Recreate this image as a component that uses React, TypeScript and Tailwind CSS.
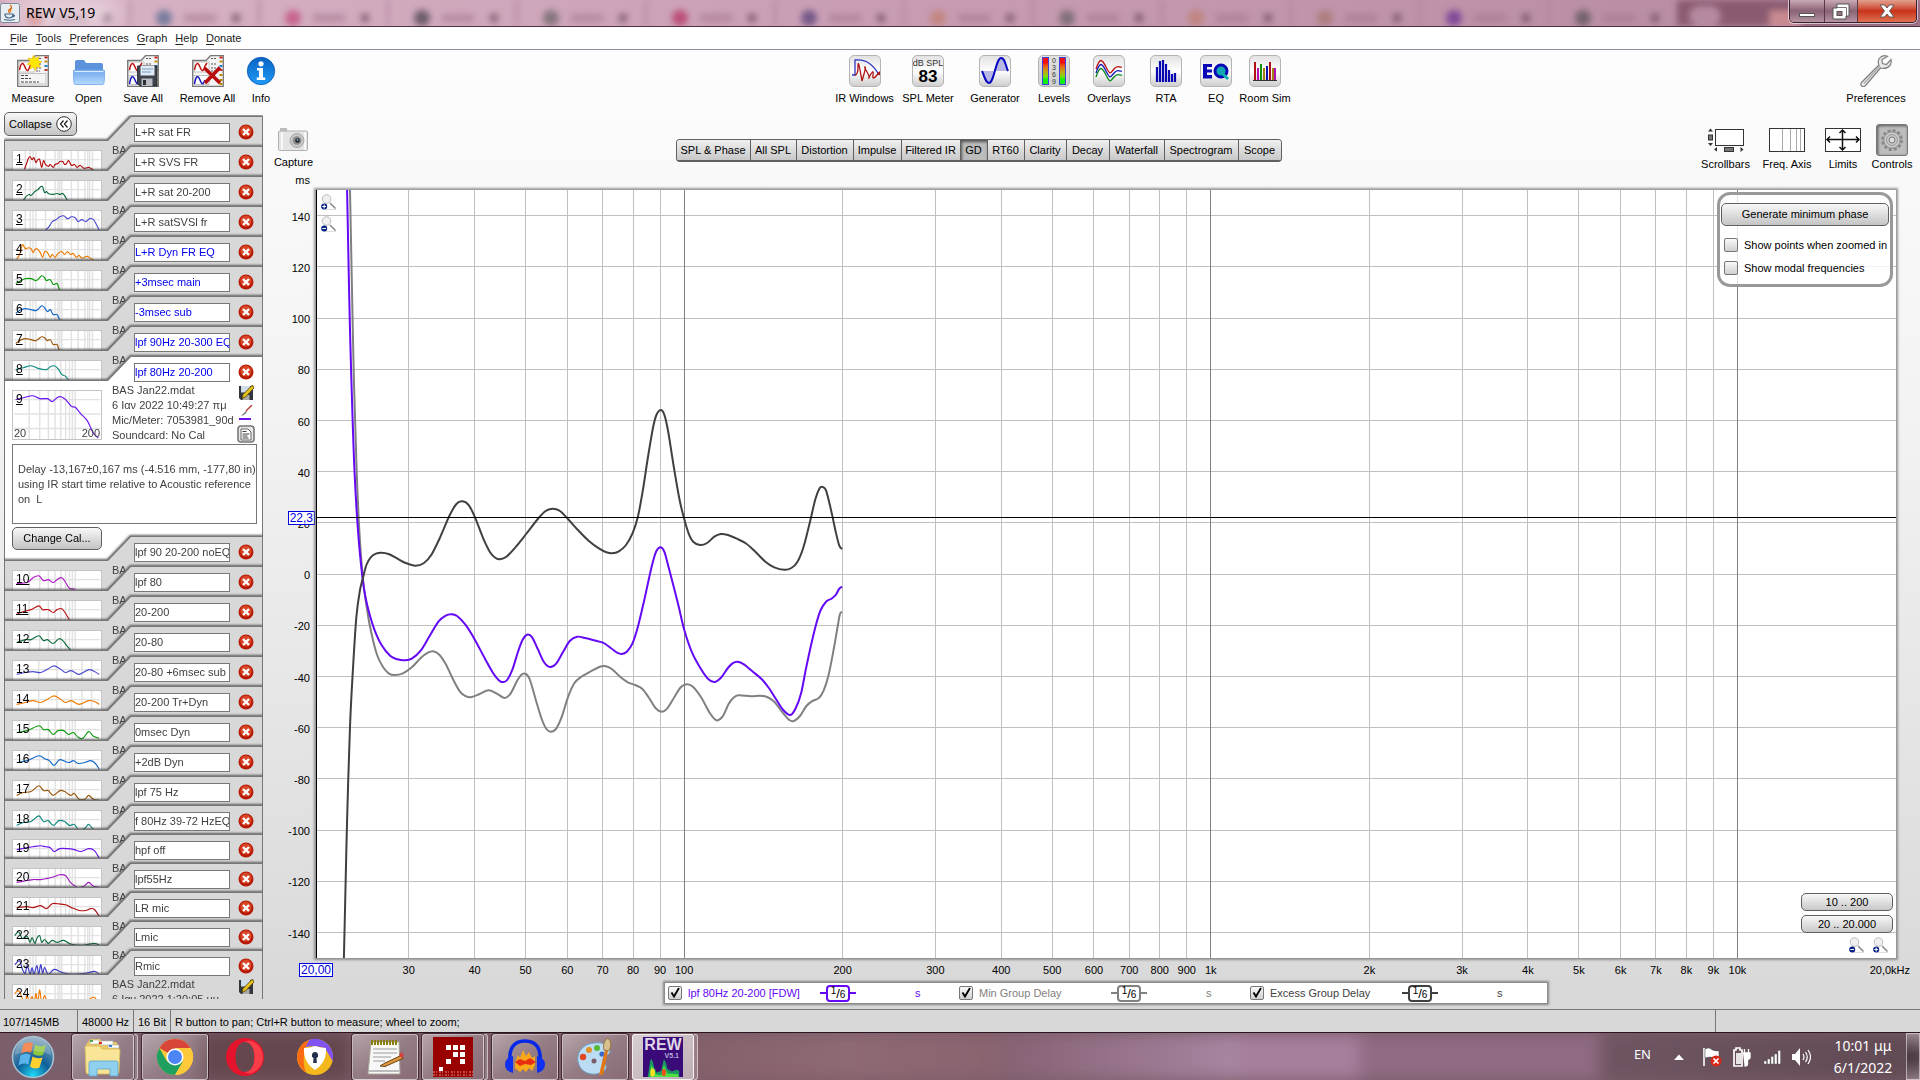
import React from "react";

type Pt = [number, number];

/* Smooth curve through the points (Catmull-Rom converted to cubic segments). */
function smooth(p: Pt[]): string {
  let d = `M${p[0][0]} ${p[0][1]}`;
  for (let i = 0; i < p.length - 1; i++) {
    const a = p[i - 1] ?? p[i];
    const b = p[i];
    const c = p[i + 1];
    const e = p[i + 2] ?? c;
    d += `C${(b[0] + (c[0] - a[0]) / 6).toFixed(2)} ${(b[1] + (c[1] - a[1]) / 6).toFixed(2)} ${(c[0] - (e[0] - b[0]) / 6).toFixed(2)} ${(c[1] - (e[1] - b[1]) / 6).toFixed(2)} ${c[0]} ${c[1]}`;
  }
  return d;
}

function pts(s: string): Pt[] {
  return s.trim().split(/\s+/).map((q) => q.split(",").map(Number) as Pt);
}

const EXCESS = pts(`27.9,768 29,720 31.1,630 34,536.7 36.9,480 40.4,426.7 44,400 47.2,387 50.4,375 54.7,367.3 60,363.7 65.4,362.7 72.6,364 81.5,368.7 90.4,373.3 99.4,375.7 107.6,373.3 115.4,364.7 124.4,346.7 133.3,326 140.4,314 146.5,311.3 152.9,315.3 159.4,328.3 167.2,348.3 174.4,362.7 179.7,368 184,369.3 190.4,366.7 199.4,357.3 210.1,344 222.6,328 229.7,321 236.9,318.7 244,321 251.1,328 261.9,340 272.6,350.7 283.3,358.7 290.4,362.3 296.1,363.3 302.9,361.3 310,355 316.5,343.3 321.9,326.7 326.9,300 331.5,270 336.9,238.3 340.4,225 344.7,220 348.3,224.7 352.2,241.7 358.3,280 363.6,310 368.3,329.3 372.6,343.3 377.2,351.7 384,355 391.1,353 398.3,346.7 404.7,344 411.9,345 420.8,348.7 429.7,353.3 438.6,361 449.4,371.7 458.3,377.3 468.3,379.7 475.4,378 481.5,371.7 487.6,356.7 494,331.7 499.4,309 503.6,298.3 506.5,297 510.1,300.7 515.4,321.7 519.7,341.7 523.3,355.7 526.1,359`);
const MEASURED = pts(`31.1,0 32.6,76.7 34,140 36.1,213.3 38.6,283.3 42.2,343.3 46.5,388 49.4,406.7 52.9,421.7 58.3,439.3 65.4,454.7 74.4,466 81.5,469.3 88.6,470.3 95.8,468.7 104.7,460.7 113.6,446 122.6,431.3 129.7,425.7 135.1,424.3 141.1,426 149.4,434.7 158.3,448.7 169,468.7 177.9,484.3 183.3,490.7 186.9,492 191.1,490 196.5,479.3 201.9,462 206.5,450 211.1,444.7 216.1,447.3 221.9,459.3 227.9,472 234,477 240.4,473.3 247.6,461 254,450.7 261.1,446.7 269,448 277.9,450.3 286.9,452.7 295.8,458.7 301.1,462.7 305.8,464 310.8,461.7 316.5,453.3 321.9,436.7 327.9,411.7 333.3,387 336.9,371.7 340.4,361 344.7,357.3 348.3,361.7 352.9,378.3 361.9,413.3 368.3,440 376.1,462.7 385.1,479.3 392.2,489 398.3,492 404.7,488 411.9,478 416.5,473.3 421.5,471.7 427.9,474.3 436.9,481.7 445.8,489.3 452.9,498 460.1,509.3 467.2,520 474.4,525 479.7,518.3 485.1,503.3 489.7,480 494.7,456.7 500.4,433.3 504.7,420 510.1,411.7 515.4,408.7 519.7,405 523.3,398.7 526.1,396.7`);
const MINIMUM = pts(`34,0 35.8,90 37.9,190 40.4,273.3 43.3,340 46.9,388 51.1,420 55.4,443.3 61.1,465 67.2,477.3 72.6,483.3 78.6,485 86.9,483.3 95.8,477.3 104.7,468 111.9,462.7 117.2,461.3 123.3,464.7 129.7,474 136.9,489 144,501.7 149.4,506 154.7,507.3 163.6,504 172.6,500.3 180.4,503.3 188.6,508 194.7,503.3 201.1,490.7 205.4,484.7 209,483.7 213.6,489 220.8,513.3 226.1,530 230.4,539 235.1,541.7 240.4,538.3 245.8,526.7 251.9,507.3 258.3,493.3 265.4,486.7 276.1,480.7 283.3,477 288.6,476 295.8,479 304.7,487.3 311.9,492.3 319,495 326.1,498.7 332.6,507.3 339.7,518.3 345.8,521.7 351.1,518.7 358.3,507.3 364.7,497.3 370.8,494.3 376.9,496.7 385.1,507.3 394,523.3 400.4,530.3 406.5,526.7 412.6,514 417.2,508 422.6,505.3 435.1,506.3 444,505.7 451.1,507 458.3,511.7 467.2,523.3 473.3,530 477.9,531 484,526 490.4,516 495.8,511.3 502.9,508 507.6,500.7 512.6,485 517.9,458.3 521.9,435 524,424 526.1,421.7`);

const WIDTH = 1580;
const HEIGHT = 768;
const fx = (f: number) => Math.log10(f / 20) / 3;
const FREQS = [30, 40, 50, 60, 70, 80, 90, 100, 200, 300, 400, 500, 600, 700, 800, 900, 1000, 2000, 3000, 4000, 5000, 6000, 7000, 8000, 9000, 10000];
const LEVELS = [140, 120, 100, 80, 60, 40, 20, 0, -20, -40, -60, -80, -100, -120, -140];

/* ---------- small icons ---------- */

function MeasureSheet({ kind }: { kind: "new" | "save" | "remove" }) {
  return (
    <svg viewBox="0 0 32 32" className="size-8" aria-hidden="true">
      <path d="M.7 31.3V5.5H14L18.500.7H31.3V31.3Z" fill="#f4f4f4" stroke="#777" strokeWidth="1.3" />
      <rect x="2" y="7" width="15" height="10" fill="#fff" stroke="#aaa" strokeWidth=".7" />
      <path d="M2.500 15C4 7 6 7 8 12S11 17 13 11L15 8" fill="none" stroke="#c01010" strokeWidth="1.5" />
      <g fill="none" strokeWidth="1.8">
        <path d="M27.500 2.500h3" stroke="#c81010" />
        <path d="M27.500 6.500h3" stroke="#b58a00" />
        <path d="M27.500 11h3" stroke="#0a70c8" />
        <path d="M27.500 15h3" stroke="#b02020" />
      </g>
      <path d="M19 3.500h6M19 9h5M19 13h5M19 16h4" stroke="#555" strokeWidth="1" strokeDasharray="2 1" />
      {kind === "new" ? (
        <>
          <path d="M4 20.500h8M4 23.500h10M4 27h18" stroke="#444" strokeWidth="1" strokeDasharray="3 1" />
          <path d="M2 18.500H29V29H2Z" fill="none" stroke="#aaa" strokeWidth=".7" />
          <path d="M16.500 0l1.700 3.500 3.800-2-1 4 4 1.200-3.400 2.100 2 3.700-4-.9-.9 4-2.200-3.500-3.500 2 .9-4-4-.9 3.500-2.300L11 3l4 1z" fill="#ffe600" stroke="#f0b800" strokeWidth=".6" />
        </>
      ) : (
        <>
          <path d="M2 20.500h15v9H2z" fill="#fff" stroke="#aaa" strokeWidth=".7" />
          <path d="M2.500 29C4 20 6 20 8 25S11 30 13 25" fill="none" stroke="#1818c0" strokeWidth="1.500" />
          <path d="M27.500 20h3M27.500 25h3M27.500 29h3" stroke="#b58a00" strokeWidth="1.800" />
        </>
      )}
      {kind === "save" && (
        <>
          <path d="M10.500 11H30v20H13l-2.500-2.500z" fill="#3f434c" stroke="#202228" strokeWidth=".8" />
          <rect x="13.500" y="11" width="14" height="9.500" fill="#dfeaf5" />
          <path d="M15 14h11M15 17h9" stroke="#7d9fc4" strokeWidth="1" />
          <rect x="14.500" y="23.500" width="11" height="7.500" fill="#b9bcc2" />
          <rect x="16" y="25" width="3" height="5" fill="#2b2d33" />
        </>
      )}
      {kind === "remove" && <path d="M12.500 13L28 28M28 12.500L13 28" stroke="#b80d0d" strokeWidth="3.600" />}
    </svg>
  );
}

function FolderIcon() {
  return (
    <svg viewBox="0 0 32 32" className="size-8" aria-hidden="true">
      <defs>
        <linearGradient id="folder" x1="0" y1="0" x2="0" y2="1">
          <stop offset="0" stopColor="#6fa5ea" />
          <stop offset="1" stopColor="#b5dcff" />
        </linearGradient>
      </defs>
      <path d="M2 27V7q0-2 2-2h7l2 3h15q2 0 2 2v17z" fill="#5b92dc" />
      <path d="M2 15h28q2 0 2 2l-1 11q0 1.500-2 1.500H3Q1 29.500 1 28L0 17q0-2 2-2z" fill="url(#folder)" stroke="#6ea4e6" strokeWidth=".8" />
      <path d="M1.500 16.500h29" stroke="#d8ecff" strokeWidth="1.200" />
    </svg>
  );
}

function InfoIcon() {
  return (
    <svg viewBox="0 0 32 32" className="size-8" aria-hidden="true">
      <defs>
        <linearGradient id="info" x1="0" y1="0" x2="0" y2="1">
          <stop offset="0" stopColor="#0b62c4" />
          <stop offset="1" stopColor="#1f9bf5" />
        </linearGradient>
      </defs>
      <circle cx="16" cy="16" r="13.700" fill="url(#info)" stroke="#0a58b0" strokeWidth=".8" />
      <circle cx="16" cy="8.800" r="2.600" fill="#fff" />
      <path d="M12 13h6v9.500h2.200v2.500h-8.400v-2.500H14V15.500h-2z" fill="#fff" />
    </svg>
  );
}

function Tile({ children }: { children: React.ReactNode }) {
  return (
    <span className="block size-8 overflow-hidden rounded-[5px] border border-[#b4b4b4] bg-linear-to-b from-[#e2e2e2] via-white to-[#cfcfcf]">
      {children}
    </span>
  );
}

const tileSvg = "size-[30px]";

function PreferencesIcon() {
  return (
    <svg viewBox="0 0 32 32" className="size-8" aria-hidden="true">
      <path d="M27.500 1.300q-5-2-8.300 2.200-1.700 3-.3 6.500L1.500 27.500q-1.500 2 .2 3.500t3.400 0L20.500 13q6 1.500 9.500-2.500 1.700-3 1-6l-4.500 5-4-1-.7-3.800z" fill="#e9e9e9" stroke="#808080" strokeWidth="1.200" />
      <path d="M4 28.500L20 11" stroke="#aaa" strokeWidth="1.200" />
    </svg>
  );
}

function ToolButton({ label, width, children }: { label: string; width: string; children: React.ReactNode }) {
  return (
    <button type="button" className={`flex flex-col items-center gap-1 ${width}`}>
      {children}
      <span className="whitespace-nowrap leading-[14px]">{label}</span>
    </button>
  );
}

function Magnifier({ plus }: { plus: boolean }) {
  return (
    <button type="button" aria-label={plus ? "Zoom in" : "Zoom out"} className="block size-4">
      <svg viewBox="0 0 16 16" className="size-4">
        <path d="M3 15.500h12" stroke="#ddd" strokeWidth="1" />
        <path d="M9 9l5.500 5.500" stroke="#8a8a8a" strokeWidth="1.600" />
        <circle cx="5.500" cy="5" r="4.300" fill="#efeff2" stroke="#bbb" strokeWidth="1" />
        <circle cx="3.200" cy="12.500" r="3" fill="#001f80" />
        <path d={plus ? "M1.300 12.500h3.800M3.200 10.600v3.800" : "M1.300 12.500h3.800"} stroke="#fff" strokeWidth="1.100" />
      </svg>
    </button>
  );
}

function DiskPencil() {
  return (
    <svg viewBox="0 0 16 16" className="size-4" aria-hidden="true">
      <path d="M1 1h14v14H3l-2-2z" fill="#33353c" />
      <rect x="3" y="1" width="9" height="6.500" fill="#cfdcea" />
      <rect x="4.500" y="10" width="7" height="5" fill="#aaa" />
      <path d="M14.500 0L5 9.500l-1 4 3.500-1.500L16 3z" fill="#e8c01c" stroke="#4a3b00" strokeWidth=".8" />
    </svg>
  );
}

/* ---------- measurement list ---------- */

type Measurement = { name: string; color: string; trace: string; span: "wide" | "mid" | "narrow" };

const ITEMS: Measurement[] = [
  { name: "L+R sat FR", color: "#b01010", span: "wide", trace: "11,19 13,14 15,8 17,6 19,9 21,7 23,12 25,9 27,9 29,17 31,10 33,14 36,16 38,14 41,17 43,14 46,13 48,11 51,11 53,14 55,13 57,10 60,15 63,14 66,17 69,15 73,18 78,17 80,18 83,20" },
  { name: "L+R SVS FR", color: "#0c6b3c", span: "wide", trace: "10,20 13,16 16,14 18,15 22,11 25,9 28,6 30,6 32,12 34,11 36,13 40,14 45,13 48,14 51,13 54,17 56,21" },
  { name: "L+R sat 20-200", color: "#4a4ad0", span: "wide", trace: "33,20 37,16 40,11 44,9 48,6 52,5 56,8 60,6 64,7 67,11 71,9 75,11 79,8 83,9 86,14 89,20" },
  { name: "L+R satSVSl fr", color: "#ee7a00", span: "wide", trace: "3,19 6,14 9,4 12,8 15,7 18,8 20,12 22,9 24,8 27,11 30,17 32,11 35,12 38,17 40,14 43,17 46,13 50,11 53,14 56,11 59,14 62,13 65,17 68,15 71,18 76,16 80,18 83,20" },
  { name: "L+R Dyn FR EQ", color: "#0a9a0a", span: "wide", trace: "2,13 6,11 12,8 18,8 23,10 26,8 29,5 32,7 34,10 38,9 41,14 45,13 47,18 49,22" },
  { name: "+3msec main", color: "#1068c8", span: "wide", trace: "2,13 6,10 12,8 18,9 23,10 26,8 29,5 32,7 35,11 38,9 41,14 45,14 47,18 49,21" },
  { name: "-3msec sub", color: "#9a5408", span: "wide", trace: "2,13 8,9 13,8 18,9 23,10 26,8 29,6 32,7 35,10 38,9 41,14 45,14 47,19 49,22" },
  { name: "lpf 90Hz 20-300 EQ", color: "#0d8a80", span: "mid", trace: "2,9 10,7 18,5 26,8 34,9 38,6 42,5 46,8 50,14 54,16 58,21" },
  { name: "lpf 80Hz 20-200", color: "#6a10f0", span: "mid", trace: "2,9 10,7 20,5 27,8 35,8 40,11 45,7 49,6 54,9 60,16 64,17 70,24 76,30 80,38 83,44 88,49" },
  { name: "lpf 90 20-200 noEQ", color: "#b018c8", span: "mid", trace: "3,13 14,12 20,7 26,5 31,10 36,9 41,12 45,9 50,7 54,12 58,18 64,19" },
  { name: "lpf 80", color: "#c01414", span: "mid", trace: "3,14 10,11 18,9 26,5 30,9 36,9 41,12 45,9 50,8 54,13 58,20" },
  { name: "20-200", color: "#0c6b3c", span: "mid", trace: "3,12 12,9 18,9 26,5 31,10 35,9 41,13 47,8 51,10 55,15 60,21" },
  { name: "20-80", color: "#4a4ad0", span: "narrow", trace: "3,14 12,12 20,11 28,12 36,8 42,5 48,8 54,12 60,10 68,14 78,9 84,11 89,14" },
  { name: "20-80 +6msec sub", color: "#ee7a00", span: "narrow", trace: "3,14 12,12 20,10 28,12 36,8 42,5 48,8 54,12 60,10 68,14 78,10 84,11 89,14" },
  { name: "20-200 Tr+Dyn", color: "#0a9a0a", span: "mid", trace: "3,12 14,10 26,5 31,9 36,9 41,14 46,10 52,10 57,14 62,12 67,17 72,18 78,11 83,16 89,18" },
  { name: "0msec Dyn", color: "#1068c8", span: "mid", trace: "3,12 14,10 26,5 32,8 37,10 42,15 48,9 57,12 62,10 67,13 74,12 80,10 85,13 89,19" },
  { name: "+2dB Dyn", color: "#9a5408", span: "mid", trace: "3,15 10,12 18,11 26,5 31,10 36,10 41,15 48,10 53,11 59,15 63,13 68,19 74,19 78,15 83,19 89,20" },
  { name: "lpf 75 Hz", color: "#0d8a80", span: "mid", trace: "3,15 10,12 18,11 26,5 31,11 36,10 41,15 47,10 53,11 58,15 63,14 68,20 74,18 78,14 83,19 89,20" },
  { name: "f 80Hz 39-72 HzEQ", color: "#6a10f0", span: "mid", trace: "3,10 14,8 20,7 28,6 33,7 38,8 42,12 48,9 56,9 63,10 70,12 78,9 84,11 89,19" },
  { name: "hpf off", color: "#a018c0", span: "mid", trace: "3,14 14,12 20,11 28,11 34,10 42,8 48,6 54,7 59,14 66,19 73,18 78,14 83,18 89,19" },
  { name: "lpf55Hz", color: "#b01010", span: "mid", trace: "3,10 14,9 20,10 28,8 34,11 40,6 46,6 54,7 60,10 68,13 75,13 80,11 84,12 89,19" },
  { name: "LR mic", color: "#0c6b3c", span: "wide", trace: "1,9 5,5 9,12 14,10 17,16 19,11 22,17 24,12 27,9 29,16 32,13 36,17 40,14 45,16 52,14 60,18 72,19 84,17 89,19" },
  { name: "Lmic", color: "#3a3acc", span: "wide", trace: "1,9 6,5 9,14 12,18 14,10 17,19 19,12 21,19 24,10 26,19 28,9 30,18 32,12 36,19 42,14 50,17 60,19 75,18 84,16 89,19" },
  { name: "Rmic", color: "#f07a00", span: "wide", trace: "1,9 5,6 9,14 12,18 14,10 16,19 19,12 21,20 23,9 25,18 27,5 29,19 32,11 35,18 38,15 42,20 50,24 60,20 76,19 80,14 84,13 89,19" },
];

const LAST = ITEMS.length - 1;

const GRIDS = {
  wide: [12, 17, 20, 23, 33, 43, 46, 48, 50, 60, 67, 74, 77, 79, 82],
  mid: [16, 27, 36, 43, 49, 54, 58, 61, 64],
  narrow: [26, 45, 60, 71, 81],
};

function Thumb({ item, index }: { item: Measurement; index: number }) {
  return (
    <span className="relative mt-[7px] block h-[50px] w-[90px] shrink-0 border border-[#c4c4c4] bg-white">
      <svg viewBox="0 0 90 50" className="block size-full" aria-hidden="true">
        <path d={GRIDS[item.span].map((x) => `M${x} 0V50`).join("") + "M0 9H90M0 24H90M0 39H90"} stroke="#e2e2e2" strokeWidth="1.500" />
        <path d={smooth(pts(item.trace))} fill="none" stroke={item.color} strokeWidth="1.200" />
      </svg>
      <span className={`absolute left-[3px] top-0 text-xs leading-4 text-black ${index < 11 ? "underline" : ""}`}>{index + 1}</span>
      {index === 8 && (
        <span className="absolute inset-x-px bottom-0 flex justify-between leading-3">
          <span>20</span>
          <span>200</span>
        </span>
      )}
    </span>
  );
}

function CardDetails({ item, index }: { item: Measurement; index: number }) {
  if (index !== 8 && index !== LAST) {
    return <div className="ml-[10px] leading-[15px]">BA</div>;
  }
  return (
    <>
      <div className="ml-[10px] w-[122px] shrink-0 whitespace-nowrap leading-[15px]">
        <div>BAS Jan22.mdat</div>
        {index === 8 ? (
          <>
            <div>6 Ιαν 2022 10:49:27 πμ</div>
            <div>Mic/Meter: 7053981_90d</div>
            <div>Soundcard: No Cal</div>
          </>
        ) : (
          <div>6 Ιαν 2022 1:20:05 μμ</div>
        )}
      </div>
      <div className="flex flex-col items-center gap-1 pl-[3px] pt-[2px]">
        <DiskPencil />
        <svg viewBox="0 0 16 16" className="size-4" aria-hidden="true">
          <path d="M14 0L8 6" stroke="#c04040" strokeWidth="1.500" />
          <path d="M8 6l-5 5 3-1 3-3z" fill="#777" />
          <path d="M1 14h12" stroke={item.color} strokeWidth="2" />
        </svg>
        <svg viewBox="0 0 18 18" className="size-[18px]" aria-hidden="true">
          <rect x="1" y="1" width="16" height="16" rx="3" fill="#e8e8e8" stroke="#777" strokeWidth="1.600" />
          <path d="M4 4h7l3 3v8H4z" fill="#fff" stroke="#666" />
          <path d="M5.500 6.500h4M5.500 9h7M5.500 11h5M5.500 13h6" stroke="#444" />
        </svg>
      </div>
    </>
  );
}

function Card({ item, index }: { item: Measurement; index: number }) {
  const open = index === 8;
  const blue = index >= 4 && index <= 8;
  const step = open ? "h-[180px]" : index >= 17 ? "h-[29px]" : "h-[30px]";
  return (
    <li className={`shrink-0 ${step}`}>
      <div className="drop-shadow-[0_-1px_1px_rgba(70,70,70,0.85)]">
        <div className="bg-[#777] px-px pt-px [clip-path:polygon(0_24px,103px_24px,126px_0,100%_0,100%_100%,0_100%)]">
          <div className={`flex flex-col ${open ? "h-[205px] bg-white" : "h-[90px] bg-[#d8d8d8]"} [clip-path:polygon(0_24px,103px_24px,126px_0,100%_0,100%_100%,0_100%)]`}>
            <div className="flex h-[26px] shrink-0 items-center gap-2 pl-[129px] pt-1">
              <input
                aria-label={`Measurement ${index + 1} name`}
                defaultValue={item.name}
                className={`h-[19px] w-24 border border-[#777] bg-white text-[11px] ${blue ? "text-[#0000f0]" : "text-[#404040]"}`}
              />
              <button type="button" aria-label={`Remove ${item.name}`} className="size-4">
                <svg viewBox="0 0 16 16" className="size-4">
                  <circle cx="8" cy="8" r="7.500" fill="#b81a08" />
                  <circle cx="8" cy="7" r="5.600" fill="#e2552f" opacity=".75" />
                  <path d="M5 5l6 6M11 5l-6 6" stroke="#fff" strokeWidth="2.400" />
                </svg>
              </button>
            </div>
            <div className="flex h-[60px] shrink-0 pl-[7px] text-[#404040]">
              <Thumb item={item} index={index} />
              <CardDetails item={item} index={index} />
            </div>
            {open && (
              <>
                <textarea
                  aria-label="Notes"
                  readOnly
                  wrap="off"
                  className="ml-[7px] mt-px h-20 w-[245px] shrink-0 resize-none overflow-hidden whitespace-pre border border-[#777] bg-white px-[5px] py-[17px] text-[11px] leading-[15px] text-[#404040]"
                  defaultValue={"Delay -13,167±0,167 ms (-4.516 mm, -177,80 in)\nusing IR start time relative to Acoustic reference\non  L"}
                />
                <button type="button" className="ml-[7px] mt-[3px] h-[23px] w-[90px] shrink-0 rounded-[5px] border border-[#606060] bg-linear-to-b from-[#f8f8f8] to-[#c4c4c4] text-black">
                  Change Cal...
                </button>
              </>
            )}
          </div>
        </div>
      </div>
    </li>
  );
}

/* ---------- graph ---------- */

const TABS: [string, string][] = [
  ["SPL & Phase", "w-[74px]"],
  ["All SPL", "w-[46px]"],
  ["Distortion", "w-[57px]"],
  ["Impulse", "w-[48px]"],
  ["Filtered IR", "w-[59px]"],
  ["GD", "w-[27px]"],
  ["RT60", "w-[37px]"],
  ["Clarity", "w-[42px]"],
  ["Decay", "w-[43px]"],
  ["Waterfall", "w-[55px]"],
  ["Spectrogram", "w-[74px]"],
  ["Scope", "w-[42px]"],
];

function Plot() {
  return (
    <svg viewBox={`0 0 ${WIDTH} ${HEIGHT}`} preserveAspectRatio="none" className="absolute inset-0 size-full" role="img" aria-label="Group delay">
      <g stroke="#c0c0c0" strokeWidth="1" shapeRendering="crispEdges">
        {LEVELS.map((v) => {
          const y = 384 - v * 2.56;
          return <line key={v} x1="0" x2={WIDTH} y1={y} y2={y} />;
        })}
        {FREQS.map((f) => {
          const x = fx(f) * WIDTH;
          return <line key={f} x1={x} x2={x} y1="0" y2={HEIGHT} stroke={f === 100 || f === 1000 || f === 10000 ? "#808080" : "#c0c0c0"} />;
        })}
      </g>
      <g fill="none" strokeWidth="2">
        <path d={smooth(MINIMUM)} stroke="#808080" />
        <path d={smooth(MEASURED)} stroke="#6408f5" />
        <path d={smooth(EXCESS)} stroke="#404040" />
      </g>
      <g stroke="#000" strokeWidth="1" shapeRendering="crispEdges">
        <line x1="0" x2={WIDTH} y1="327.500" y2="327.500" />
        <line x1=".5" x2=".5" y1="0" y2={HEIGHT} />
      </g>
    </svg>
  );
}

const checkCls =
  "size-[14px] shrink-0 appearance-none rounded-[2px] border border-[#777] bg-linear-to-b from-[#fafafa] to-[#cfcfcf]";

function LegendItem({ label, text, line }: { label: string; text: string; line: string }) {
  return (
    <div className={`flex w-[291px] items-center ${text}`}>
      <label className="flex w-[152px] items-center gap-[6px] whitespace-nowrap">
        <span className="relative block size-[14px] shrink-0">
          <input type="checkbox" defaultChecked className={`${checkCls} block`} />
          <svg viewBox="0 0 14 14" className="pointer-events-none absolute inset-0 size-[14px]" aria-hidden="true">
            <path d="M3.500 6.500L6 10.500 11 2" fill="none" stroke="#000" strokeWidth="1.900" />
          </svg>
        </span>
        {label}
      </label>
      <span className={`h-0.5 w-[6px] ${line}`} />
      <button type="button" className="flex h-[17px] w-6 items-center justify-center rounded-[4px] border-2 border-current bg-white" aria-label={`Smoothing for ${label}`}>
        <span className="-mt-1 text-[10px] leading-none text-black">1</span>
        <span className="text-[13px] leading-none text-black">/</span>
        <span className="mt-1 text-[10px] leading-none text-black">6</span>
      </button>
      <span className={`h-0.5 w-[6px] ${line}`} />
      <span className="ml-[59px]">s</span>
    </div>
  );
}

function fmt(f: number) {
  return f >= 1000 ? `${f / 1000}k` : `${f}`;
}

function GraphButton({ label, width, children }: { label: string; width: string; children: React.ReactNode }) {
  return (
    <button type="button" className={`flex flex-col items-center ${width}`}>
      <span className="flex h-8 items-center">{children}</span>
      <span className="whitespace-nowrap pt-[1px] leading-[14px]">{label}</span>
    </button>
  );
}

function GraphHeader() {
  return (
    <header className="flex h-[78px] shrink-0 items-start">
      <div className="ml-[7px] flex h-full w-[45px] flex-col items-center pt-4">
        <button type="button" className="flex flex-col items-center gap-1">
          <svg viewBox="0 0 30 23" className="h-[23px] w-[30px]" aria-hidden="true">
            <rect x="2" y="0" width="7" height="4" fill="#bbb" />
            <rect x=".5" y="3" width="29" height="19.500" rx="1" fill="#e4e4e4" stroke="#b0b0b0" />
            <path d="M4 4v18M27 4v18" stroke="#f8f8f8" strokeWidth="2" />
            <circle cx="19" cy="12.500" r="7" fill="#c6c6c6" stroke="#a8a8a8" />
            <circle cx="19" cy="12.500" r="4.300" fill="#8c8c8c" />
            <circle cx="19.500" cy="12.500" r="2.300" fill="#222" />
            <circle cx="19.500" cy="12" r=".9" fill="#8ac" />
          </svg>
          <span className="leading-[14px]">Capture</span>
        </button>
        <span className="mt-1 self-end pr-[6px] leading-[14px]">ms</span>
      </div>
      <nav className="flex flex-1 justify-center pt-[27px]">
        <div className="flex h-[23px] overflow-hidden rounded-[4px] border border-b-2 border-[#606060]">
          {TABS.map(([t, w], i) => (
            <button
              key={t}
              type="button"
              className={`${w} shrink-0 whitespace-nowrap border-[#606060] ${i < TABS.length - 1 ? "border-r" : ""} ${
                t === "GD" ? "bg-[#bcbcbc] shadow-[inset_1px_2px_3px_#555]" : "bg-linear-to-b from-[#f0f0f0] to-[#c8c8c8]"
              }`}
            >
              {t}
            </button>
          ))}
        </div>
      </nav>
      <div className="flex w-[279px] justify-end pr-1 pt-3">
        <GraphButton label="Scrollbars" width="w-[61px]">
          <svg viewBox="0 0 38 26" className="h-[26px] w-[38px]" aria-hidden="true">
            <rect x="8.500" y="2.500" width="28" height="16" fill="#fff" stroke="#333" />
            <path d="M1 4.500l2.500-3 2.500 3zM1 16l2.500 3L6 16zM10 20v4.500L7 22.500zM33.500 20v5l3-2.500z" fill="#333" />
            <rect x="1.500" y="8" width="4" height="5" fill="#777" stroke="#333" />
            <rect x="17.500" y="20.500" width="9" height="4" fill="#777" stroke="#333" />
          </svg>
        </GraphButton>
        <GraphButton label="Freq. Axis" width="w-[62px]">
          <svg viewBox="0 0 36 24" className="h-6 w-9" aria-hidden="true">
            <rect x=".5" y=".5" width="35" height="23" fill="#fff" stroke="#333" />
            <path d="M13.500 1v22M21.500 1v22M27.500 1v22M31.500 1v22" stroke="#aaa" />
          </svg>
        </GraphButton>
        <GraphButton label="Limits" width="w-[50px]">
          <svg viewBox="0 0 36 24" className="h-6 w-9" aria-hidden="true">
            <rect x=".5" y=".5" width="35" height="23" fill="#fff" stroke="#333" />
            <path d="M2 11.500h32M17.500 2v20M5 8.500l-3 3 3 3M31 8.500l3 3-3 3M14.500 5l3-3 3 3M14.500 19l3 3 3-3" fill="none" stroke="#111" strokeWidth="1.500" />
          </svg>
        </GraphButton>
        <GraphButton label="Controls" width="w-[48px]">
          <span className="flex size-8 items-center justify-center rounded-[3px] border border-[#777] bg-[#bdbdbd] shadow-[inset_1px_1px_3px_#555]">
            <svg viewBox="0 0 24 24" className="size-6" aria-hidden="true">
              <circle cx="12" cy="12" r="9.500" fill="none" stroke="#8a8a8a" strokeWidth="3" strokeDasharray="3 2" />
              <circle cx="12" cy="12" r="8.300" fill="#c9c9c9" stroke="#8a8a8a" />
              <circle cx="12" cy="12" r="5.500" fill="none" stroke="#999" />
              <circle cx="12" cy="12" r="3" fill="#ddd" stroke="#777" />
            </svg>
          </span>
        </GraphButton>
      </div>
    </header>
  );
}

function GraphArea() {
  const smallBtn = "h-[18px] w-[92px] rounded-[5px] border border-[#606060] bg-linear-to-b from-[#f8f8f8] to-[#c8c8c8] leading-none";
  return (
    <section className="flex min-w-0 flex-1 flex-col">
      <GraphHeader />
      <div className="flex min-h-0 flex-1">
        <div className="relative flex w-[52px] shrink-0 flex-col pr-[6px] text-right">
          {LEVELS.map((v) => (
            <div key={v} className="flex flex-1 items-center justify-end pt-[3px]">
              {v}
            </div>
          ))}
          <span className="absolute right-px top-[42.7%] -translate-y-1/2 border border-[#0000e0] bg-white px-px text-xs leading-3 text-[#0000e0]">22,3</span>
        </div>
        <div className="relative min-w-0 flex-1 bg-white shadow-[0_0_2px_2px_rgba(120,120,120,0.75)]">
          <Plot />
          <div className="absolute left-[5px] top-1 flex flex-col gap-[6px]">
            <Magnifier plus />
            <Magnifier plus={false} />
          </div>
          <div className="absolute right-[3px] top-[2px] flex h-[95px] w-[176px] flex-col rounded-[13px] border-3 border-[#999] bg-white/80 px-px pt-2">
            <button type="button" className="h-[23px] rounded-[5px] border border-[#606060] bg-linear-to-b from-[#f8f8f8] to-[#c4c4c4]">
              Generate minimum phase
            </button>
            <label className="mt-3 flex h-[14px] items-center gap-[6px] whitespace-nowrap pl-[3px]">
              <input type="checkbox" className={checkCls} />
              Show points when zoomed in
            </label>
            <label className="mt-[9px] flex h-[14px] items-center gap-[6px] whitespace-nowrap pl-[3px]">
              <input type="checkbox" className={checkCls} />
              Show modal frequencies
            </label>
          </div>
          <div className="absolute bottom-[5px] right-[3px] flex flex-col items-end gap-1">
            <button type="button" className={smallBtn}>10 .. 200</button>
            <button type="button" className={smallBtn}>20 .. 20.000</button>
            <div className="flex gap-2 pr-1">
              <Magnifier plus={false} />
              <Magnifier plus />
            </div>
          </div>
        </div>
        <div className="w-6 shrink-0" />
      </div>
      <div className="mb-[6px] ml-[52px] mr-6 shrink-0">
        <div className="relative h-[25px]">
          <span className="absolute left-0 top-[5px] -translate-x-1/2 border border-[#0000e0] bg-white px-px text-xs leading-3 text-[#0000e0]">20,00</span>
          {FREQS.map((f) => (
            <span key={f} className="absolute top-[5px] -translate-x-1/2 leading-[14px]" style={{ left: `${fx(f) * 100}%` }}>
              {fmt(f)}
            </span>
          ))}
          <span className="absolute right-[-14px] top-[5px] leading-[14px]">20,0kHz</span>
        </div>
        <div className="mx-auto flex h-5 w-[882px] items-center bg-white pl-[3px] shadow-[0_0_2px_2px_rgba(100,100,100,0.7)]">
          <LegendItem label="lpf 80Hz 20-200 [FDW]" text="text-[#6408f5]" line="bg-[#6408f5]" />
          <LegendItem label="Min Group Delay" text="text-[#808080]" line="bg-[#808080]" />
          <LegendItem label="Excess Group Delay" text="text-[#404040]" line="bg-[#404040]" />
        </div>
      </div>
    </section>
  );
}

/* ---------- window frame ---------- */

const BROWSER_TABS = ["#c25a50", "#3c5a86", "#c0336a", "#2a2a35", "#555", "#b0184c", "#3a2a6a", "#c07a60", "#555", "#c07a60", "#a07060", "#5a1a90", "#444"];

function TitleBar() {
  return (
    <div className="relative flex h-[27px] shrink-0 items-center overflow-hidden border-b border-[#4a3040] bg-linear-to-r from-[#d8b4c6] via-[#c79bb2] to-[#b58aa0]">
      <div className="pointer-events-none absolute inset-0 flex blur-[3px]" aria-hidden="true">
        {BROWSER_TABS.map((c, i) => (
          <div key={i} className="flex w-[129px] shrink-0 items-end gap-3 border-l-2 border-[#b08098] pl-[25px]">
            <span className="size-4 rounded-full opacity-60" style={{ backgroundColor: c }} />
            <span className="mb-1 h-2 w-8 bg-[#a07088]/50" />
            <span className="mb-1 ml-1 size-2 bg-[#6a4458]/70" />
          </div>
        ))}
        <div className="flex flex-1 items-end bg-[#8a5a70]">
          <span className="ml-3 h-5 w-8 rounded-full bg-[#b58aa0]" />
          <span className="ml-12 h-4 w-8 bg-[#c88a90]" />
        </div>
      </div>
      <div className="pointer-events-none absolute inset-y-0 left-5 w-24 bg-white/50 blur-md" aria-hidden="true" />
      <svg viewBox="0 0 20 20" className="relative size-5" aria-hidden="true">
        <rect x=".5" y=".5" width="19" height="19" rx="2" fill="#e8edf2" stroke="#7a8a9a" />
        <path d="M10 2q3 2 0 4t0 4M12 5q-3 2-1 4" fill="none" stroke="#e06a10" strokeWidth="1.300" />
        <path d="M5 11h8q0 4-4 4t-4-4zM13 12q3 0 0 2M4 16.500q6 1.500 11 0" fill="none" stroke="#40688c" strokeWidth="1.200" />
      </svg>
      <h1 className="relative ml-[6px] font-['Noto_Sans',sans-serif] text-sm leading-5 text-black">REW V5,19</h1>
      <div className="relative ml-auto mr-[3px] flex h-[23px] self-start overflow-hidden rounded-b-[5px] border border-t-0 border-[#3a2030] shadow-[0_0_0_1px_rgba(255,255,255,0.6)]">
        <button type="button" aria-label="Minimize" className="flex w-[35px] items-end justify-center border-r border-[#5a3a4a] bg-linear-to-b from-[#c9a9b6] via-[#8a6375] to-[#b493a3] pb-[5px]">
          <span className="h-1 w-4 border border-[#555] bg-white" />
        </button>
        <button type="button" aria-label="Restore" className="flex w-[33px] items-center justify-center border-r border-[#5a3a4a] bg-linear-to-b from-[#c9a9b6] via-[#8a6375] to-[#b493a3]">
          <svg viewBox="0 0 18 17" className="h-[17px] w-[18px]">
            <path d="M5 1h12v12h-3v3H1V5h4z" fill="#fff" stroke="#555" />
            <path d="M5 4.500h9.500V13" fill="none" stroke="#777" />
            <rect x="5" y="8.500" width="5" height="4" fill="#987085" stroke="#555" />
          </svg>
        </button>
        <button type="button" aria-label="Close" className="flex w-[58px] items-center justify-center bg-linear-to-b from-[#e0a090] via-[#c83018] to-[#e07050]">
          <svg viewBox="0 0 16 14" className="h-[14px] w-4">
            <path d="M1 1h4.500L8 4l2.500-3H15l-4.500 6 4.500 6h-4.500L8 10l-2.500 3H1l4.500-6z" fill="#fff" stroke="#555" strokeWidth=".9" />
          </svg>
        </button>
      </div>
    </div>
  );
}

function Toolbar() {
  const mark = (x: number, h: number, c: string) => <path key={x} d={`M${x} 25V${25 - h}`} stroke={c} strokeWidth="2" />;
  return (
    <div className="flex h-[62px] shrink-0 justify-between pl-[5px] pr-[14px] pt-[5px]">
      <div className="flex">
        <ToolButton label="Measure" width="w-14"><MeasureSheet kind="new" /></ToolButton>
        <ToolButton label="Open" width="w-[55px]"><FolderIcon /></ToolButton>
        <ToolButton label="Save All" width="w-[54px]"><MeasureSheet kind="save" /></ToolButton>
        <ToolButton label="Remove All" width="w-[75px]"><MeasureSheet kind="remove" /></ToolButton>
        <ToolButton label="Info" width="w-[32px]"><InfoIcon /></ToolButton>
      </div>
      <div className="flex">
        <ToolButton label="IR Windows" width="w-[63px]">
          <Tile>
            <svg viewBox="0 0 30 30" className={tileSvg} aria-hidden="true">
              <path d="M2 19h3V4q15-2 24 15" fill="none" stroke="#3038c0" strokeWidth="1.300" />
              <path d="M5 19q3 0 3-8t2 3 2 11 2-7 1-7 2 5 2 6 2-4 2 1 4 0 2 0" fill="none" stroke="#b01010" strokeWidth="1.300" />
            </svg>
          </Tile>
        </ToolButton>
        <ToolButton label="SPL Meter" width="w-16">
          <Tile>
            <span className="flex flex-col items-center pt-0.5">
              <span className="whitespace-nowrap text-[9px] leading-[10px] text-[#333]">dB SPL</span>
              <span className="text-[17px] font-bold leading-[18px]">83</span>
            </span>
          </Tile>
        </ToolButton>
        <ToolButton label="Generator" width="w-[70px]">
          <Tile>
            <svg viewBox="0 0 30 30" className={tileSvg} aria-hidden="true">
              <path d="M2 15q6 26 12 0zM14 15q7-26 14 0z" fill="#b8b8e4" />
              <path d="M2 15C5 22 6 27 9 27c5 0 7-25 12-25 4 0 4 6 7 13" fill="none" stroke="#0808c0" strokeWidth="2" />
            </svg>
          </Tile>
        </ToolButton>
        <ToolButton label="Levels" width="w-12">
          <span className="flex size-8 justify-between rounded-[5px] border border-[#b4b4b4] bg-linear-to-b from-[#e2e2e2] to-[#cfcfcf] px-[3px] py-px">
            <span className="w-[7px] border border-[#4040e0] bg-linear-to-b from-[#f01010] from-20% to-[#10f010] to-80%" />
            <span className="flex flex-col justify-center text-[7px] leading-[7px] text-[#333]"><span>0</span><span>3</span><span>6</span><span>9</span></span>
            <span className="w-[7px] border border-[#4040e0] bg-linear-to-b from-[#f01010] from-20% to-[#10f010] to-80%" />
          </span>
        </ToolButton>
        <ToolButton label="Overlays" width="w-[62px]">
          <Tile>
            <svg viewBox="0 0 30 30" className={tileSvg} aria-hidden="true">
              <g fill="none" strokeWidth="1.300">
                <path d="M2 13C6 1 8 3 12 11s4 7 8 2 5-1 8-2" stroke="#b81010" />
                <path d="M2 17C6 5 8 7 12 15s4 7 8 2 5-1 8-2" stroke="#1818c0" />
                <path d="M2 21C6 9 8 11 12 19s4 7 8 2 5-1 8-2" stroke="#0a8a20" />
              </g>
            </svg>
          </Tile>
        </ToolButton>
        <ToolButton label="RTA" width="w-[52px]">
          <Tile>
            <svg viewBox="0 0 30 30" className={tileSvg} aria-hidden="true">
              {[15, 21, 22, 18, 12, 8, 9].map((h, i) => <path key={i} d={`M${6 + i * 3} 26V${26 - h}`} stroke="#0808b0" strokeWidth="2.200" />)}
            </svg>
          </Tile>
        </ToolButton>
        <ToolButton label="EQ" width="w-12">
          <Tile>
            <svg viewBox="0 0 30 30" className={tileSvg} aria-hidden="true">
              <path d="M2 8h9v3H6v2.500h5v3H6V19h5v3.500H2z" fill="#0808b8" />
              <circle cx="20" cy="15" r="6" fill="#10a8b0" stroke="#0808b8" strokeWidth="3" />
              <path d="M21 17l6 6" stroke="#10b0b0" strokeWidth="3" />
            </svg>
          </Tile>
        </ToolButton>
        <ToolButton label="Room Sim" width="w-[50px]">
          <Tile>
            <svg viewBox="0 0 30 30" className={tileSvg} aria-hidden="true">
              <g transform="translate(0,-1)">
                {mark(5, 18, "#b01010")}{mark(8, 12, "#b010b0")}{mark(11, 16, "#109010")}{mark(14, 12, "#a08010")}{mark(17, 14, "#1010b0")}{mark(20, 18, "#b01010")}{mark(23, 12, "#a08010")}{mark(25, 12, "#b010b0")}
                <path d="M3 25.500h24" stroke="#333" />
              </g>
            </svg>
          </Tile>
        </ToolButton>
      </div>
      <ToolButton label="Preferences" width="w-[60px]"><PreferencesIcon /></ToolButton>
    </div>
  );
}

/* ---------- taskbar ---------- */

function TaskButton({ name, state, stack, children }: { name: string; state?: "run" | "active"; stack?: boolean; children: React.ReactNode }) {
  const skin =
    state === "active"
      ? "border-white/80 bg-linear-to-br from-white/70 to-white/50"
      : state === "run"
        ? "border-white/50 bg-linear-to-br from-white/45 via-white/20 to-white/10 shadow-[0_0_0_1px_rgba(30,10,20,0.6)]"
        : "border-transparent";
  return (
    <button type="button" aria-label={name} className="flex h-[46px] w-[66px] items-center">
      <span className={`flex h-full flex-1 items-center justify-center rounded-[3px] border ${skin}`}>{children}</span>
      {stack && <span className="h-full w-1 rounded-r-[3px] border border-l-0 border-white/50 bg-white/20" />}
    </button>
  );
}

const big = "h-10 w-10";

function TaskBar() {
  return (
    <footer className="relative flex h-12 shrink-0 items-center overflow-hidden border-t border-[#2a1520] bg-[#7b5c69] text-white">
      <div className="pointer-events-none absolute inset-0 flex blur-[8px]" aria-hidden="true">
        <div className="w-[200px] bg-[#7b5f6c]" />
        <div className="w-[150px] bg-[#64474d]" />
        <div className="w-[340px] bg-[#7b5c66]" />
        <div className="w-[310px] bg-linear-to-r from-[#84606a] via-[#8e6a72] to-[#8a6470]" />
        <div className="w-[240px] bg-linear-to-r from-[#856273] to-[#a885a2]" />
        <div className="w-[120px] bg-[#a57f9c]" />
        <div className="w-[240px] bg-[#8f6b83]" />
        <div className="flex-1 bg-linear-to-r from-[#6f5562] to-[#604a54]" />
      </div>
      <button type="button" aria-label="Start" className="relative ml-[11px] size-11">
        <svg viewBox="0 0 44 44" className="size-11">
          <defs>
            <radialGradient id="orb" cx=".5" cy=".95" r=".9">
              <stop offset="0" stopColor="#20d8f8" />
              <stop offset=".45" stopColor="#0f5f98" />
              <stop offset="1" stopColor="#7fa0b8" />
            </radialGradient>
          </defs>
          <circle cx="22" cy="22" r="20.500" fill="url(#orb)" stroke="#a8c4d4" strokeWidth="1.500" />
          <path d="M12.500 9q5-3 9.500-.5l-2 9.500q-5-2.500-10 .5z" fill="#f07030" />
          <path d="M24 9.500q5 3 11 .5l-3 10q-5 2-10-1z" fill="#8cc63c" />
          <path d="M9.500 20.500q5-3 10-.5l-2 9.500q-5-2.500-10 1z" fill="#5ab4ec" />
          <path d="M21.500 21.500q5 3 10 1l-3 10q-5 2.500-9.500-1z" fill="#ffd030" />
          <path d="M4 20A18 18 0 0 1 40 20Q22 12 4 20z" fill="#fff" opacity=".2" />
        </svg>
      </button>
      <div className="relative ml-[17px] flex gap-1">
        <TaskButton name="Explorer" state="run" stack>
          <svg viewBox="0 0 40 40" className={big}>
            <path d="M3 8l4-6h10l2 3h14l3 4v26H3z" fill="#e9c964" />
            <path d="M7 3h9v4H7zM18 4h12v4H18zM25 8h11v3H25z" fill="#fff" stroke="#b0b0a0" strokeWidth=".6" />
            <path d="M16 5h3v2h-3z" fill="#d83020" /><path d="M7 3h3v2H7z" fill="#50a050" /><path d="M26 8h3v2h-3z" fill="#3a80d0" />
            <path d="M2 9h15l2 3h17q1 0 1 1l-1 22q0 2-2 2H5q-2 0-2-2z" fill="#f8e598" stroke="#d8b550" strokeWidth=".8" />
            <path d="M6 39V26q0-2 2-2h25q2 0 2 2v13h-8v-7H14v7z" fill="#8fd0ee" stroke="#5aa5cc" strokeWidth=".8" />
          </svg>
        </TaskButton>
        <TaskButton name="Chrome" state="run">
          <svg viewBox="0 0 40 40" className={big}>
            <circle cx="20" cy="20" r="18" fill="#fdc93a" />
            <path d="M20 20L4.400 11A18 18 0 0 1 35.600 11z" fill="#d8463a" />
            <path d="M4.400 11A18 18 0 0 0 20 38l8-13.500H12z" fill="#1fa060" />
            <path d="M20 11h15.600A18 18 0 0 1 20 38l8-13.500z" fill="#fdc93a" />
            <circle cx="20" cy="20" r="8.500" fill="#fff" /><circle cx="20" cy="20" r="7" fill="#4b86f4" />
          </svg>
        </TaskButton>
        <TaskButton name="Opera">
          <svg viewBox="0 0 40 40" className={big}>
            <path fillRule="evenodd" d="M20 1a19 19 0 1 0 .01 0zM20 5c5.500 0 9.500 6 9.500 15S25.500 35 20 35s-9.500-6-9.500-15S14.500 5 20 5z" fill="#e3142c" />
            <path fillRule="evenodd" d="M20 5q4-3 9 0 9 5 9 15t-9 15q-5 3-9 0c5.500 0 9.500-6 9.500-15S25.500 5 20 5z" fill="#f83c48" />
          </svg>
        </TaskButton>
        <TaskButton name="Secure Browser">
          <svg viewBox="0 0 40 40" className={big}>
            <circle cx="20" cy="20" r="18" fill="#f5b81c" />
            <path d="M14 3a18 18 0 0 1 23.500 21L30 11Q20 8 10 10z" fill="#8052f0" />
            <path d="M14 3Q3 7 2 20q1 11 9 15-4-8-1-24z" fill="#fa6a12" />
            <path d="M20 9q6 2 11 2 1 14-11 22Q8 25 9 11q6 0 11-2z" fill="#fff" />
            <path d="M20 15a3.200 3.200 0 0 1 1.500 6L21.800 26h-3.600l.3-5A3.200 3.200 0 0 1 20 15z" fill="#22304c" />
          </svg>
        </TaskButton>
        <TaskButton name="Notepad" state="run">
          <svg viewBox="0 0 40 40" className={big}>
            <path d="M6 5h28l1 32H3z" fill="#f8f8f8" stroke="#aaa89c" />
            <path d="M3.500 34h31" stroke="#bbb" strokeWidth="2" />
            <path d="M7 3v5M10 3v5M13 3v5M16 3v5M19 3v5M22 3v5M25 3v5M28 3v5M31 3v5" stroke="#8a8010" strokeWidth="2" />
            <path d="M8 12h24M8 16h24M8 20h18M8 24h12" stroke="#9a9a9a" />
            <path d="M37 18L20 26l-5 3 5 .5 18-8z" fill="#d89840" stroke="#704010" /><path d="M34 17l3-2 2 4-3 2z" fill="#d84040" />
          </svg>
        </TaskButton>
        <TaskButton name="Foobar" state="run" stack>
          <svg viewBox="0 0 40 40" className={big}>
            <rect width="40" height="40" fill="#990000" />
            <path d="M13 8h5v5h-5zM20 8h5v5h-5zM27 8h5v5h-5zM20 15h5v5h-5zM27 15h5v5h-5zM13 22h5v5h-5zM27 22h5v5h-5zM6 30h4v4H6z" fill="#fff" />
            <path d="M0 35h40M0 38h40" stroke="#d06060" strokeWidth="1.500" strokeDasharray="2 1 1 2" />
          </svg>
        </TaskButton>
        <TaskButton name="Audacity" state="run">
          <svg viewBox="0 0 40 40" className={big}>
            <path d="M10 26l3-8 2 3 3-8 3 6 3-4 3 6 3-2v9l-3 6-3-3-3 4-3-3-3 3-5-4z" fill="#f8a818" />
            <path d="M10 25l5-3 5 2 5-3 6 4-5 3-6-1-5 2z" fill="#e83010" />
            <path d="M5 26Q3 4 20 4t15 22" fill="none" stroke="#0828e8" strokeWidth="3.500" />
            <path d="M8 19v17Q0 34 0 27.500T8 19zM32 19v17q8-2 8-8.500T32 19z" fill="#1030f0" />
          </svg>
        </TaskButton>
        <TaskButton name="Paint" state="run">
          <svg viewBox="0 0 40 40" className={big}>
            <path d="M19 6C6 7 0 18 4 28s18 12 26 5c4-5-3-6-2-11s8-3 7-9-8-8-16-7z" fill="#bcdcf4" stroke="#6d9cc4" />
            <circle cx="8" cy="20" r="3.200" fill="#e04828" /><circle cx="14" cy="13" r="3" fill="#e89028" /><circle cx="22" cy="11" r="3" fill="#58b838" /><circle cx="27" cy="17" r="2.600" fill="#3868c8" />
            <circle cx="19" cy="24" r="2.500" fill="#7b5c69" />
            <path d="M24 38l6-25 3 1-5 24z" fill="#e07818" /><path d="M29 13q-2-8 4-12 5 5 1 13z" fill="#d8c090" stroke="#9a7840" />
          </svg>
        </TaskButton>
        <TaskButton name="REW" state="active" stack>
          <span className="relative flex size-10 flex-col overflow-hidden bg-[#3a0a78]">
            <span className="text-center text-base font-bold leading-[16px] text-[#e0d8e8]">REW</span>
            <span className="pr-1 text-right text-[7px] font-bold leading-[6px] text-[#b8b0d8]">V5.1</span>
            <svg viewBox="0 0 40 20" className="h-[18px] w-10" aria-hidden="true">
              <path d="M3 20L6 1q2-3 4 8l3 6 5-2 3-13q3 4 4 11l5 3 5-2 3 1v7z" fill="#1a9a60" />
              <path d="M5 19l2-12q3 4 5 10l6 1 3-11 4 9 12 1v3H6z" fill="#50e040" />
              <ellipse cx="8.500" cy="15" rx="2.500" ry="4.500" fill="#f8e020" /><ellipse cx="21" cy="15" rx="2.300" ry="4" fill="#f05018" />
            </svg>
          </span>
        </TaskButton>
      </div>
      <div className="relative ml-auto flex h-full items-center font-['Noto_Sans',sans-serif]">
        <span className="mb-1 mr-[23px] text-[13px]">EN</span>
        <svg viewBox="0 0 10 6" className="mr-[18px] h-[6px] w-[10px]" aria-label="Show hidden icons"><path d="M0 6l5-5.500L10 6z" fill="#fff" /></svg>
        <svg viewBox="0 0 20 20" className="mr-[9px] size-5" aria-label="Action center">
          <path d="M2 1v18" stroke="#fff" strokeWidth="1.600" /><path d="M3 2q4-2 6 0t8 2v8q-4 1-6-1t-8 0z" fill="#fff" stroke="#444" strokeWidth=".5" />
          <circle cx="14" cy="14" r="5.500" fill="#d82818" /><path d="M11.500 11.500l5 5M16.500 11.500l-5 5" stroke="#fff" strokeWidth="1.700" />
        </svg>
        <svg viewBox="0 0 20 20" className="mr-3 size-5" aria-label="Power">
          <path d="M3 3h2V1h4v2h2v16H3z" fill="none" stroke="#fff" strokeWidth="1.700" /><path d="M5 6h5v11H5z" fill="#fff" opacity=".85" />
          <path d="M12 6h7v5l-2.500 2v4q0 2-3 2M13.500 6V2M17.500 6V2" fill="#fff" stroke="#fff" strokeWidth="1.300" />
        </svg>
        <svg viewBox="0 0 18 16" className="mr-[10px] h-4 w-[18px]" aria-label="Network">
          <path d="M1 12h2.500v3H1zM4.500 10H7v5H4.500zM8 7.500h2.500V15H8zM11.500 5H14v10h-2.500zM15 1.500h2.500V15H15z" fill="#fff" stroke="#555" strokeWidth=".4" />
        </svg>
        <svg viewBox="0 0 20 20" className="mr-[20px] size-5" aria-label="Volume">
          <path d="M1 7h3l5-6v18l-5-6H1z" fill="#fff" /><path d="M12 7q2 3 0 6M14.500 5q3.500 5 0 10M17 3q5 7 0 14" fill="none" stroke="#fff" strokeWidth="1.200" />
        </svg>
        <div className="w-16 text-center text-sm leading-[22px]">
          <div>10:01 μμ</div>
          <div>6/1/2022</div>
        </div>
        <button type="button" aria-label="Show desktop" className="ml-[11px] h-full w-[14px] border border-white/50 bg-linear-to-b from-white/30 via-black/20 to-white/20" />
      </div>
    </footer>
  );
}

export default function App() {
  return (
    <div className="flex h-screen min-h-[700px] w-full flex-col overflow-hidden bg-[#d8d8d8] font-['Liberation_Sans',Arial,sans-serif] text-[11px] text-black">
      <TitleBar />
      <nav className="flex h-[23px] shrink-0 items-center gap-2 border-b border-[#8a8f9c] bg-white pl-[10px] text-[#222]">
        {["File", "Tools", "Preferences", "Graph", "Help", "Donate"].map((m) => (
          <button key={m} type="button">
            <span className="underline underline-offset-2">{m[0]}</span>
            {m.slice(1)}
          </button>
        ))}
      </nav>
      <main className="flex min-h-0 flex-1 flex-col bg-linear-to-b from-[#fdfdfd] via-[#f2f2f2] via-40% to-[#d8d8d8]">
        <Toolbar />
        <div className="flex min-h-0 flex-1">
          <aside className="flex w-[264px] shrink-0 flex-col pb-[10px] pl-1 pr-px">
            <button type="button" className="z-10 -mb-[21px] flex h-6 w-[73px] shrink-0 items-center justify-between rounded-[5px] border border-[#606060] bg-linear-to-b from-[#f8f8f8] to-[#c4c4c4] pl-1 pr-1">
              Collapse
              <svg viewBox="0 0 16 16" className="size-4" aria-hidden="true">
                <circle cx="8" cy="8" r="7.300" fill="#fff" stroke="#333" />
                <path d="M7.500 4.500L4.500 8l3 3.500M11.500 4.500L8.500 8l3 3.500" fill="none" stroke="#222" strokeWidth="1.300" />
              </svg>
            </button>
            <ul className="flex min-h-0 flex-1 flex-col overflow-hidden pt-px">
              {ITEMS.map((item, i) => (
                <Card key={item.name} item={item} index={i} />
              ))}
            </ul>
          </aside>
          <GraphArea />
        </div>
      </main>
      <div className="flex h-[23px] shrink-0 border-t border-[#777] bg-[#d8d8d8] leading-[25px]">
        <span className="w-[78px] border-r border-[#777] pl-[3px]">107/145MB</span>
        <span className="w-[56px] whitespace-nowrap border-r border-[#777] pl-1">48000 Hz</span>
        <span className="w-[37px] whitespace-nowrap border-r border-[#777] pl-1">16 Bit</span>
        <span className="flex-1 pl-1">R button to pan; Ctrl+R button to measure; wheel to zoom;</span>
        <span className="w-[205px] border-l border-[#777]" />
      </div>
      <TaskBar />
    </div>
  );
}
